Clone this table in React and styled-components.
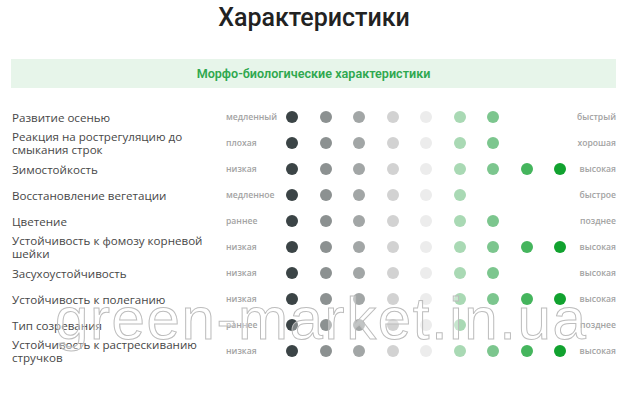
import React from "react";
import styled, { createGlobalStyle } from "styled-components";

const GlobalStyle = createGlobalStyle`
  body {
    margin: 0;
    background: #ffffff;
    font-family: "Open Sans", "Liberation Sans", sans-serif;
  }
`;

const DOT_COLORS = [
  "#3b4446",
  "#8c9191",
  "#a2a6a6",
  "#d2d2d2",
  "#ececec",
  "#a9d9b4",
  "#7cc68e",
  "#45b55d",
  "#11a22f",
];

const rows = [
  { name: "Развитие осенью", min: "медленный", max: "быстрый", level: 7 },
  { name: "Реакция на рострегуляцию до смыкания строк", min: "плохая", max: "хорошая", level: 7 },
  { name: "Зимостойкость", min: "низкая", max: "высокая", level: 9 },
  { name: "Восстановление вегетации", min: "медленное", max: "быстрое", level: 6 },
  { name: "Цветение", min: "раннее", max: "позднее", level: 7 },
  { name: "Устойчивость к фомозу корневой шейки", min: "низкая", max: "высокая", level: 9 },
  { name: "Засухоустойчивость", min: "низкая", max: "высокая", level: 7 },
  { name: "Устойчивость к полеганию", min: "низкая", max: "высокая", level: 9 },
  { name: "Тип созревания", min: "раннее", max: "позднее", level: 6 },
  { name: "Устойчивость к растрескиванию стручков", min: "низкая", max: "высокая", level: 9 },
];

const Page = styled.div`
  position: relative;
  width: 640px;
  height: 396px;
  overflow: hidden;
`;

const Title = styled.h2`
  margin: 0 12px 0 0;
  padding-top: 3px;
  height: 55px;
  box-sizing: border-box;
  text-align: center;
  font-family: Roboto, "Liberation Sans", sans-serif;
  font-weight: 500;
  font-size: 25px;
  line-height: 30px;
  color: #222222;
`;

const Band = styled.div`
  margin: 4px 24px 0 11px;
  height: 29px;
  background: #e7f5ea;
  display: flex;
  align-items: center;
  justify-content: center;
  font-family: Roboto, "Liberation Sans", sans-serif;
  font-weight: 600;
  font-size: 12.6px;
  color: #2fa84f;
`;

const Table = styled.div`
  margin: 16px 24px 0 12px;
`;

const Row = styled.div`
  display: flex;
  align-items: center;
  height: 26px;
`;

const Label = styled.div`
  width: 214px;
  font-size: 11.6px;
  line-height: 13px;
  color: #474747;
`;

const Value = styled.div`
  font-size: 8.6px;
  font-weight: 600;
  color: #a3a3a3;
  ${(p) => (p.$right ? "flex: 1; text-align: right;" : "width: 60px;")}
`;

const Dots = styled.div`
  display: flex;
  gap: 21.5px;
`;

const Dot = styled.span`
  width: 12px;
  height: 12px;
  border-radius: 50%;
  background: ${(p) => p.$color};
`;

const Watermark = styled.div`
  position: absolute;
  left: 55px;
  top: 284px;
  font-family: "Liberation Sans", sans-serif;
  font-size: 60px;
  letter-spacing: 1.6px;
  color: rgba(255, 255, 255, 0.35);
  -webkit-text-stroke: 1px #bdbdbd;
  pointer-events: none;
  white-space: nowrap;
`;

export default function App() {
  return (
    <Page>
      <GlobalStyle />
      <Title>Характеристики</Title>
      <Band>Морфо-биологические характеристики</Band>
      <Table>
        {rows.map((r) => (
          <Row key={r.name}>
            <Label>{r.name}</Label>
            <Value>{r.min}</Value>
            <Dots>
              {DOT_COLORS.map((c, i) => (
                <Dot key={i} $color={i < r.level ? c : "transparent"} />
              ))}
            </Dots>
            <Value $right>{r.max}</Value>
          </Row>
        ))}
      </Table>
      <Watermark>green-market.in.ua</Watermark>
    </Page>
  );
}
